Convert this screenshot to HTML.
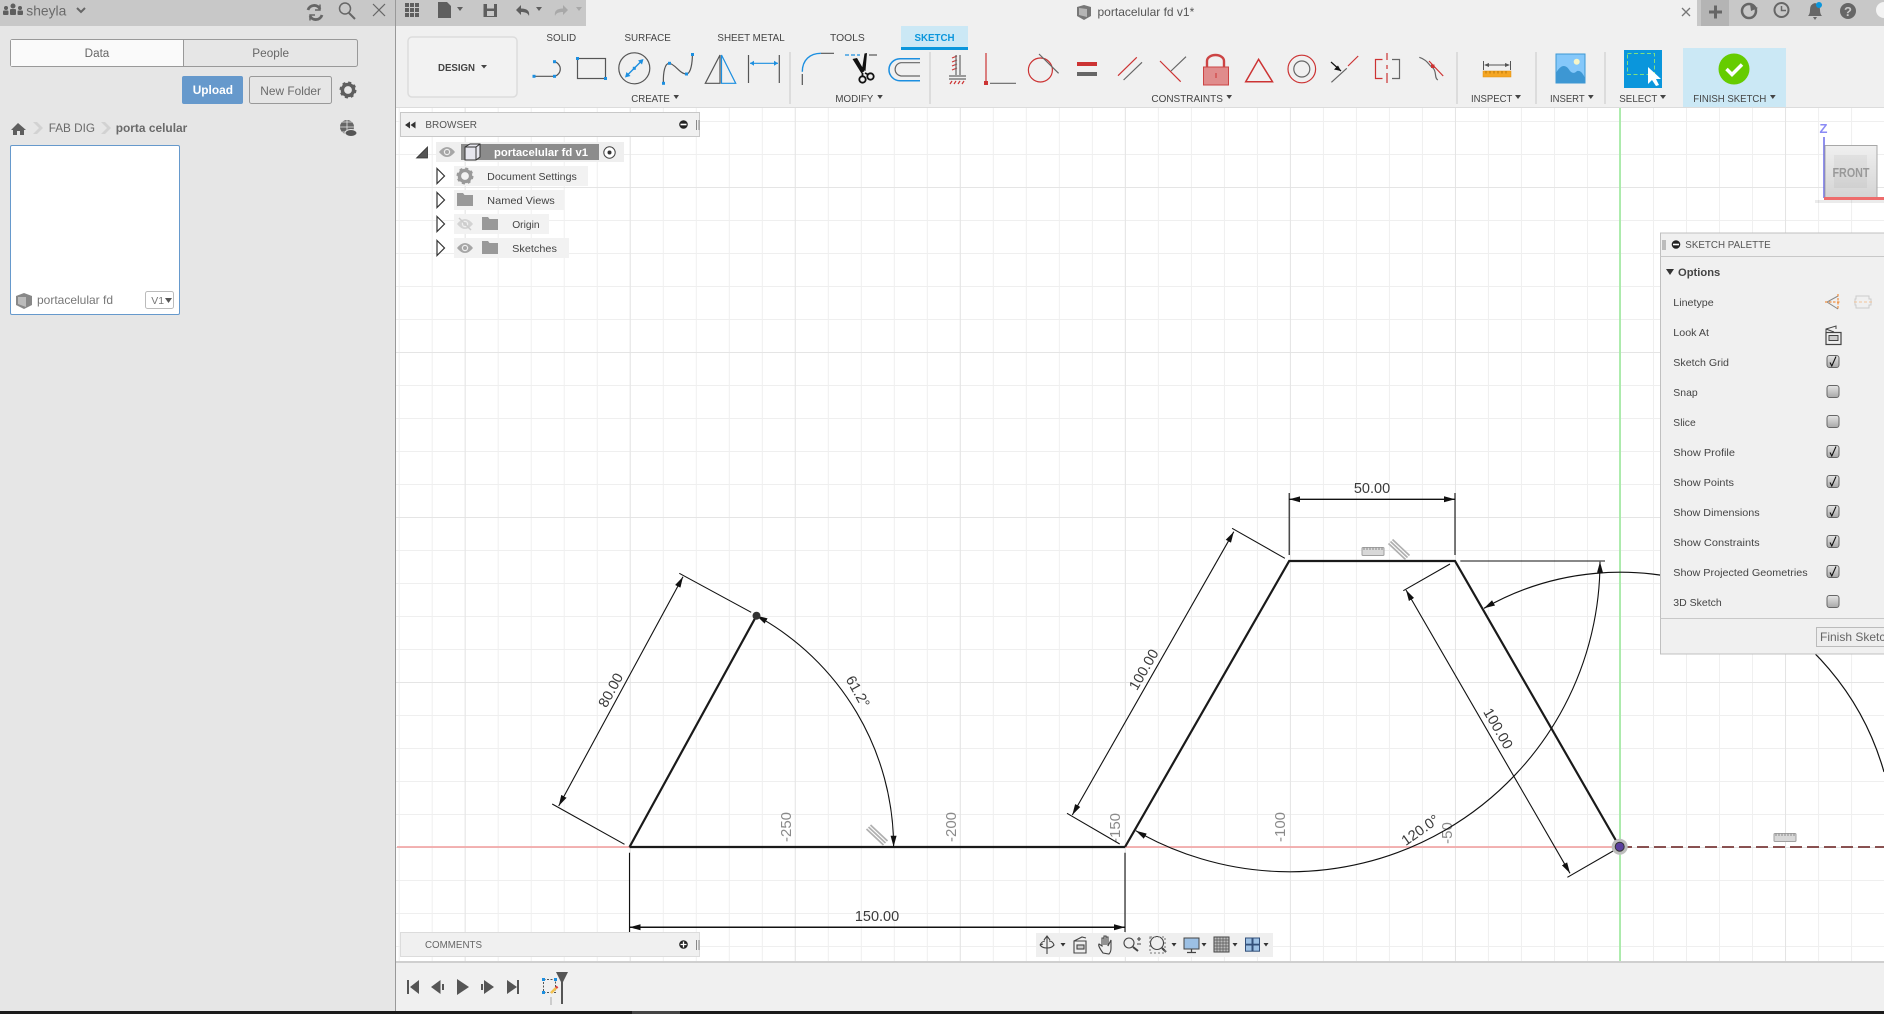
<!DOCTYPE html>
<html><head><meta charset="utf-8"><title>portacelular fd v1</title>
<style>
html,body{margin:0;padding:0;width:1884px;height:1014px;overflow:hidden;background:#fff}
svg{display:block;font-family:"Liberation Sans",Arial,sans-serif}
</style></head><body>
<svg width="1884" height="1014" viewBox="0 0 1884 1014" xmlns="http://www.w3.org/2000/svg">
<defs>
<pattern id="gm" patternUnits="userSpaceOnUse" x="1620" y="847" width="33.008" height="33"><path d="M0 0V33M0 0H33.008" fill="none" stroke="#efefef" stroke-width="2"/></pattern>
<pattern id="gM" patternUnits="userSpaceOnUse" x="1620" y="847" width="165.04" height="165"><path d="M0 0V165M0 0H165.04" fill="none" stroke="#e2e2e2" stroke-width="1.6"/></pattern>
<marker id="a" markerWidth="12" markerHeight="8" refX="11" refY="3.5" orient="auto-start-reverse" markerUnits="userSpaceOnUse"><path d="M0 0.5L11 3.5L0 6.5z" fill="#111"/></marker>
<linearGradient id="cb" x1="0" y1="0" x2="0" y2="1"><stop offset="0" stop-color="#e6e6e6"/><stop offset="1" stop-color="#a8a8a8"/></linearGradient>
<linearGradient id="vc" x1="0" y1="0" x2="0" y2="1"><stop offset="0" stop-color="#f0f0f0"/><stop offset="1" stop-color="#d4d4d4"/></linearGradient>
<g id="eye"><path d="M-8 0Q0-10 8 0Q0 10-8 0z" fill="#a6a6a6"/><circle r="3.2" fill="#eee"/><circle r="2" fill="#a6a6a6"/></g>
<g id="fold"><path d="M0 1h6l1.5 2H16V14H0z" fill="#999"/></g>
<g id="gear"><circle r="5.6" fill="none" stroke="currentColor" stroke-width="3.4"/><circle r="7.4" fill="none" stroke="currentColor" stroke-width="2.2" stroke-dasharray="3 2.8"/></g>
<g id="tri"><path d="M0 0L7.5 7.5L0 15z" fill="#fff" stroke="#333" stroke-width="1.2"/></g>
<g id="cbox"><rect x="-6" y="-6" width="12" height="12" rx="2.5" fill="url(#cb)" stroke="#666" stroke-width="1"/></g>
<g id="chk"><use href="#cbox"/><path d="M-3 1L-1.2 4.5L3 -5" fill="none" stroke="#111" stroke-width="1.1"/></g>
<g id="ruler"><rect x="0" y="1.500" width="22" height="8" rx="1" fill="#d8d8d8" stroke="#a0a0a0"/><path d="M2 1.500V4M5 1.500V4M8 1.500V4M11 1.500V4M14 1.500V4M17 1.500V4M20 1.500V4" stroke="#8a8a8a"/></g>
<g id="hatch" fill="none" stroke="#b0b0b0" stroke-width="1.700"><path d="M-8.500-8L8.500 8"/><path d="M-10.500-6L6.500 10"/><path d="M-6.500-10L10.500 6"/></g>
</defs>

<!-- canvas -->
<rect x="396" y="108" width="1488" height="854" fill="#fff"/>
<rect x="396" y="108" width="1488" height="854" fill="url(#gm)"/>
<rect x="396" y="108" width="1488" height="854" fill="url(#gM)"/>

<!-- axes -->
<path d="M397 847H1620" stroke="#f2a8a8" stroke-width="1.800"/>
<path d="M1620 108V961" stroke="#a6eba6" stroke-width="1.800"/>
<path d="M1620 847H1884" stroke="#7a3a3a" stroke-width="1.800" stroke-dasharray="12 5"/>

<!-- axis labels -->
<g fill="#8a8a8a" font-size="15" text-anchor="middle">
<text transform="translate(791 827) rotate(-90)">-250</text>
<text transform="translate(956 827) rotate(-90)">-200</text>
<text transform="translate(1120 828) rotate(-90)">-150</text>
<text transform="translate(1285 827) rotate(-90)">-100</text>
<text transform="translate(1452 833) rotate(-90)">-50</text>
</g>

<!-- sketch geometry -->
<g fill="none" stroke="#1a1a1a" stroke-width="2.200">
<path d="M629.500 847H1125"/>
<path d="M629.500 847L756.500 615.700"/>
<path d="M1125 847L1289.200 561H1455L1619.700 847"/>
</g>
<g fill="none" stroke="#111" stroke-width="1.100">
<path d="M624.500 844.300L552.200 804M751.200 612.300L679.300 573.300"/>
<path d="M558.700 806L683 576.700" marker-start="url(#a)" marker-end="url(#a)"/>
<path d="M756.500 615.700A264 264 0 0 1 893.600 846.700" marker-start="url(#a)" marker-end="url(#a)"/>
<path d="M629.500 852.700V932M1125 852.700V932"/>
<path d="M629.500 927.300H1125" marker-start="url(#a)" marker-end="url(#a)" stroke-width="1.500"/>
<path d="M1289.200 493V555M1455 493V555"/>
<path d="M1289.200 499.300H1455" marker-start="url(#a)" marker-end="url(#a)" stroke-width="1.400"/>
<path d="M1067 813.300L1119.700 844M1232.100 528.300L1284.900 558.300"/>
<path d="M1072.300 815L1233.800 531.700" marker-start="url(#a)" marker-end="url(#a)"/>
<path d="M1450 564L1403.300 590.700M1614.800 850L1567.400 877.300"/>
<path d="M1406 590L1570 873.300" marker-start="url(#a)" marker-end="url(#a)"/>
<path d="M1460.300 561H1605"/>
<path d="M1135.800 830.700A310 310 0 0 0 1600 561.700" marker-start="url(#a)" marker-end="url(#a)"/>
<path d="M1484 608.300A274.400 274.400 0 0 1 1884 772" marker-start="url(#a)" stroke-width="1.200"/>
</g>
<circle cx="756.500" cy="615.700" r="4" fill="#333"/>
<circle cx="1619.700" cy="846.700" r="8" fill="#bdbdbd"/><circle cx="1619.700" cy="846.700" r="4.500" fill="#5b3f9e" stroke="#333"/>

<!-- dim text -->
<g fill="#3a3a3a" font-size="14.500" text-anchor="middle">
<text transform="translate(615 692.500) rotate(-61.500)">80.00</text>
<text transform="translate(853.600 694) rotate(61)">61.2°</text>
<text x="877" y="921">150.00</text>
<text x="1372" y="493">50.00</text>
<text transform="translate(1148 672) rotate(-60)">100.00</text>
<text transform="translate(1494 731) rotate(60)">100.00</text>
<text transform="translate(1423 834) rotate(-35)">120.0°</text>
</g>
<use href="#hatch" x="877" y="835"/>
<use href="#hatch" x="1399" y="549.500"/>
<use href="#ruler" x="1362" y="546"/>
<use href="#ruler" x="1774" y="832"/>

<!-- ribbon bg -->
<rect x="396" y="0" width="1488" height="107" fill="#f0f0f0"/>
<path d="M396 107.500H1884" stroke="#dcdcdc"/>
<rect x="396" y="0" width="190" height="26" fill="#c8c8c8"/>
<rect x="1697" y="0" width="187" height="26" fill="#c8c8c8"/>
<rect x="1701" y="0" width="28" height="26" fill="#b4b4b4"/>
<rect x="1683" y="48" width="103" height="59" fill="#cbe8f5"/>

<!-- left panel -->
<rect x="0" y="0" width="396" height="1014" fill="#e6e6e6"/>
<rect x="0" y="0" width="396" height="26" fill="#c8c8c8"/>
<path d="M395.500 0V1014" stroke="#999"/>
<g fill="#5e5e5e"><circle cx="13" cy="6" r="2.500"/><circle cx="6" cy="8" r="2"/><circle cx="20" cy="8" r="2"/><rect x="10" y="9" width="6" height="6" rx="1"/><rect x="3" y="10.500" width="5.500" height="4.500" rx="1"/><rect x="17.500" y="10.500" width="5.500" height="4.500" rx="1"/></g>
<text x="26.300" y="15.500" font-size="14" fill="#6a6a6a" textLength="40" lengthAdjust="spacingAndGlyphs">sheyla</text>
<path d="M77 8L81 12L85 8" fill="none" stroke="#666" stroke-width="2"/>
<g fill="none" stroke="#666"><path d="M308 10A6.500 6.500 0 0 1 320 9M322 15A6.500 6.500 0 0 1 310 16" stroke-width="2.800"/><path d="M320 4.500V10H315M310 20.500V15H315" stroke-width="1.500"/>
<circle cx="345" cy="8.500" r="5.500" stroke-width="1.500"/><path d="M349 13L355 19" stroke-width="2"/><path d="M373 4L385 16M385 4L373 16" stroke-width="1.200"/></g>
<rect x="10.500" y="39.500" width="347" height="27" rx="2" fill="#e6e6e6" stroke="#999"/>
<rect x="11" y="40" width="172" height="26" fill="#fafafa"/>
<path d="M183.500 40V66" stroke="#999"/>
<text x="84.700" y="57" font-size="11.500" fill="#666" textLength="24.600" lengthAdjust="spacingAndGlyphs">Data</text>
<text x="252.300" y="57" font-size="11.500" fill="#666" textLength="36.700" lengthAdjust="spacingAndGlyphs">People</text>
<rect x="182" y="76" width="61" height="28" rx="2" fill="#6699cc"/>
<text x="192.700" y="94" font-size="12" font-weight="bold" fill="#fff" textLength="40.300" lengthAdjust="spacingAndGlyphs">Upload</text>
<rect x="249.500" y="76.500" width="82" height="27" rx="2" fill="#e6e6e6" stroke="#999"/>
<text x="260.300" y="95" font-size="12" fill="#6a6a6a" textLength="60.700" lengthAdjust="spacingAndGlyphs">New Folder</text>
<use href="#gear" x="348" y="90" color="#5e5e5e"/>
<path d="M18 123L11 130H13V135H17V131H20V135H24V130H26z" fill="#5e5e5e"/>
<path d="M33 122L39 128L33 134H37L43 128L37 122z" fill="#d2d2d2"/>
<text x="48.700" y="132" font-size="12" fill="#6a6a6a" textLength="46.300" lengthAdjust="spacingAndGlyphs">FAB DIG</text>
<path d="M101 122L107 128L101 134H105L111 128L105 122z" fill="#d2d2d2"/>
<text x="115.700" y="132" font-size="12" font-weight="bold" fill="#6a6a6a" textLength="71.600" lengthAdjust="spacingAndGlyphs">porta celular</text>
<circle cx="347" cy="127" r="7" fill="#666"/><path d="M340 127H354M347 120V134M342 122H352M342 132H352" stroke="#e6e6e6" stroke-width=".8"/><ellipse cx="351" cy="133" rx="6" ry="3.500" fill="#555" stroke="#e6e6e6"/>
<rect x="10.500" y="145.500" width="169" height="169" rx="1.500" fill="#fff" stroke="#6699cc"/>
<path d="M16 296L24 293L32 296V305L24 309L16 305z" fill="#888"/><path d="M18 297L26 297V307L18 304z" fill="#bbb"/>
<text x="37" y="304" font-size="12" fill="#777" textLength="76" lengthAdjust="spacingAndGlyphs">portacelular fd</text>
<rect x="145.500" y="291.500" width="28" height="17" rx="2" fill="#fff" stroke="#bbb"/>
<text x="151.300" y="304" font-size="10.500" fill="#777">V1</text>
<path d="M165 298H172L168.500 303z" fill="#555"/>

<!-- top icons -->
<g fill="#5e5e5e">
<path d="M405 3h4v4h-4zM410 3h4v4h-4zM415 3h4v4h-4zM405 8h4v4h-4zM410 8h4v4h-4zM415 8h4v4h-4zM405 13h4v4h-4zM410 13h4v4h-4zM415 13h4v4h-4z"/>
<path d="M438 2H447L451 6V18H438z"/><path d="M457 7H463L460 11z"/>
<path d="M483.500 4H497V17H483.500z"/>
<path d="M516 10L521 5V8.500C527 8.500 530 11 529 16C528 13 525 12 521 12V15z"/><path d="M536 7H542L539 11z"/>
</g>
<rect x="487" y="4" width="7" height="4.500" fill="#c8c8c8"/><rect x="487" y="11" width="7" height="5" fill="#c8c8c8"/>
<g fill="#a8a8a8"><path d="M568 10L563 5V8.500C557 8.500 554 11 555 16C556 13 559 12 563 12V15z"/><path d="M576 7H582L579 11z"/></g>
<path d="M1084 5L1091 7V16L1084 20L1077 16V7z" fill="#777"/><path d="M1079 8L1087 9V17L1079 15z" fill="#b5b5b5"/>
<text x="1097.500" y="16" font-size="12" fill="#555" textLength="96.800" lengthAdjust="spacingAndGlyphs">portacelular fd v1*</text>
<path d="M1682 8L1690 16M1690 8L1682 16" stroke="#777" stroke-width="1.300"/>
<path d="M1709 12H1722M1715.500 5.500V18.500" stroke="#666" stroke-width="3"/>
<circle cx="1749" cy="11" r="7" fill="none" stroke="#666" stroke-width="2.500"/><path d="M1750 4L1758 8L1751 11z" fill="#666"/>
<circle cx="1781.500" cy="10" r="7" fill="none" stroke="#666" stroke-width="2"/><path d="M1781.500 6V10.500H1786" fill="none" stroke="#666" stroke-width="1.500"/>
<path d="M1815 3Q1810 4 1810 10Q1810 14 1808 16H1822Q1820 14 1820 10Q1820 4 1815 3zM1813 17H1817L1815 20z" fill="#666"/><circle cx="1819" cy="5" r="3" fill="#0a96dc"/>
<circle cx="1848" cy="11" r="8" fill="#666"/><text x="1848" y="16" font-size="13" font-weight="bold" text-anchor="middle" fill="#c8c8c8">?</text>
<circle cx="1884" cy="10" r="8" fill="#f4f4f4"/>

<!-- Design -->
<rect x="408" y="37" width="109" height="60" rx="4" fill="#f2f2f2" stroke="#dcdcdc" stroke-width="1.500"/>
<text x="438" y="71" font-size="10.500" font-weight="bold" fill="#444" textLength="37" lengthAdjust="spacingAndGlyphs">DESIGN</text>
<path d="M481 65H487L484 68.500z" fill="#444"/>

<!-- tabs -->
<g font-size="10.500" fill="#444">
<text x="546.400" y="41" textLength="29.700" lengthAdjust="spacingAndGlyphs">SOLID</text>
<text x="624.500" y="41" textLength="46.300" lengthAdjust="spacingAndGlyphs">SURFACE</text>
<text x="717.400" y="41" textLength="67.300" lengthAdjust="spacingAndGlyphs">SHEET METAL</text>
<text x="830" y="41" textLength="34.800" lengthAdjust="spacingAndGlyphs">TOOLS</text>
</g>
<rect x="901" y="26" width="67" height="24" fill="#cbe8f5"/><rect x="901" y="47" width="67" height="3" fill="#0a96dc"/>
<text x="914.500" y="41" font-size="10.500" font-weight="bold" fill="#0a96dc" textLength="40" lengthAdjust="spacingAndGlyphs">SKETCH</text>

<!-- section labels -->
<g font-size="10.500" fill="#444">
<text x="631.200" y="102" textLength="38.600" lengthAdjust="spacingAndGlyphs">CREATE</text>
<text x="835.400" y="102" textLength="37.900" lengthAdjust="spacingAndGlyphs">MODIFY</text>
<text x="1151.400" y="102" textLength="71.500" lengthAdjust="spacingAndGlyphs">CONSTRAINTS</text>
<text x="1471" y="102" textLength="41.300" lengthAdjust="spacingAndGlyphs">INSPECT</text>
<text x="1550" y="102" textLength="34.700" lengthAdjust="spacingAndGlyphs">INSERT</text>
<text x="1619.300" y="102" textLength="38" lengthAdjust="spacingAndGlyphs">SELECT</text>
<text x="1693.300" y="102" textLength="73" lengthAdjust="spacingAndGlyphs">FINISH SKETCH</text>
</g>
<g fill="#444">
<path d="M673.500 95H679L676.200 99zM877.300 95H882.800L880 99zM1226.400 95H1232L1229.200 99zM1515 95H1521L1518 99zM1588 95H1593.700L1590.800 99zM1660 95H1666L1663 99zM1770 95H1775.700L1772.800 99z"/>
</g>
<g fill="#dcdcdc"><rect x="789" y="52" width="2" height="52"/><rect x="929" y="52" width="2" height="52"/><rect x="1456" y="52" width="2" height="52"/><rect x="1535" y="52" width="2" height="52"/><rect x="1604" y="52" width="2" height="52"/></g>

<!-- create icons -->
<g fill="none" stroke-width="1.200">
<path d="M534 76.300H554.500" stroke="#555"/><path d="M554.500 61.700A7.500 7.500 0 0 1 554.500 76.300" stroke="#555"/>
<rect x="577.500" y="58.500" width="28" height="20" stroke="#555"/>
<circle cx="634.300" cy="68.300" r="15.500" stroke="#555"/>
<path d="M626 76.500L642.500 60" stroke="#1c8fe0" stroke-width="1.400"/>
<path d="M663.400 83.300C663 72 665 63 669.400 63.300C675 64 680 74 686.300 74C691 74 692.400 62 692.400 54.300" stroke="#555"/>
<path d="M705.300 83.300L720 55V83.300z" stroke="#555"/><path d="M721.500 55L735.700 83.300H721.500z" stroke="#1c8fe0"/>
<path d="M748.500 55V83M779.300 55V83" stroke="#555"/><path d="M750 63.300H778" stroke="#1c8fe0"/>
<path d="M802.300 71.700C802.300 60 810 53.300 820.900 53.300" stroke="#1c8fe0" stroke-width="1.400"/><path d="M821 53.300H834M802.300 74V85" stroke="#555"/>
<path d="M845 55H860" stroke="#1c8fe0" stroke-dasharray="4 2"/><path d="M869 55H877" stroke="#555"/>
<path d="M920 58.700H900A11 11 0 0 0 900 80.700H920" stroke="#1c8fe0" stroke-width="1.500"/><path d="M920 62.700H901A6.700 6.700 0 0 0 901 76H920" stroke="#666"/>
</g>
<g fill="#1c8fe0">
<rect x="532.500" y="74.800" width="3" height="3"/><rect x="553" y="74.800" width="3" height="3"/><rect x="553" y="60.200" width="3" height="3"/>
<rect x="576" y="57" width="3" height="3"/><rect x="604" y="77" width="3" height="3"/>
<rect x="632.800" y="66.800" width="3" height="3"/><path d="M643.500 59L638 60.500L642 64.500zM625 77.500L630.500 76L626.500 72z"/>
<rect x="662" y="81.800" width="3" height="3"/><rect x="668" y="61.800" width="3" height="3"/><rect x="685" y="72.500" width="3" height="3"/><rect x="691" y="53" width="3" height="3"/>
<path d="M750 63.300L754 60.800V65.800zM778 63.300L774 60.800V65.800z"/>
</g>
<path d="M852.500 59L857 58L864.500 71L861.500 73.500zM864.500 53.500L867 53L865.500 71L862 69z" fill="#111"/>
<g stroke="#111" fill="none" stroke-width="1.800"><circle cx="862.500" cy="79.500" r="3.200"/><circle cx="870.500" cy="76.500" r="3.200"/><path d="M862.500 73V76.500M865 73L868 74.500"/></g>

<!-- constraints -->
<g fill="none" stroke="#cc3333" stroke-width="1.200">
<path d="M952 58L957 56M952 62L957 60M952 66L957 64M952 70L957 68"/>
<path d="M952 81L950 84M956 81L954 84M960 81L958 84M964 81L962 84"/>
<path d="M986 53V83"/><circle cx="1040.400" cy="70" r="12"/>
<path d="M1118 75.700L1136.800 57.300M1160 61L1180.700 81.700"/>
<path d="M1245.700 81.700L1258.600 59.300L1272.500 81.700z" stroke-width="1.500"/>
<circle cx="1301.800" cy="69" r="13.800"/>
<path d="M1348 66L1358.200 56M1429 61L1443.200 76"/>
<path d="M1382.500 59.500H1375.500V78.500H1382.500M1387 53V60M1387 65V69M1387 73V83"/>
</g>
<g fill="none" stroke="#666" stroke-width="1.200">
<path d="M956 55V75M960 55V75M949 76H966M949 79H966"/>
<path d="M990 83.300H1016M1039 54L1058.600 73.300"/>
<path d="M1123.600 80L1142 62.300M1171 71L1186 56.700"/>
<circle cx="1301.800" cy="69" r="8"/>
<path d="M1331.400 82.300L1346.800 68.300M1392 59.500H1399.500V78.500H1392"/>
<path d="M1419.300 57.300C1428 60 1429 66 1433 68C1437 72 1434 78 1437.900 80"/>
</g>
<g fill="#cc3333"><rect x="984" y="81" width="4" height="4"/><rect x="1077" y="62" width="20" height="4"/><rect x="1431" y="64.500" width="3.500" height="3.500"/></g>
<rect x="1077" y="72" width="20" height="4" fill="#666"/>
<path d="M1207 67V61A8.500 6 0 0 1 1224 61V67" fill="none" stroke="#cc4444" stroke-width="2.400"/>
<rect x="1203.500" y="67" width="25" height="18" fill="#e08c8c" stroke="#cc4444"/><path d="M1216 73V78" stroke="#cc3333"/>
<path d="M1331 62L1341 71" stroke="#111" stroke-width="1.200"/><path d="M1341 71L1334 69.500L1338 65.500z" fill="#111"/>

<!-- inspect / insert / select / finish -->
<path d="M1483.500 61V70M1510.500 61V70" stroke="#555"/><path d="M1485 65H1509" stroke="#555"/><path d="M1484 65L1489 63V67zM1510 65L1505 63V67z" fill="#555"/>
<rect x="1483" y="71" width="28" height="6" fill="#f5a623" stroke="#e0900f" stroke-width=".5"/><path d="M1486 71V73.500M1490 71V73.500M1494 71V73.500M1498 71V73.500M1502 71V73.500M1506 71V73.500" stroke="#a86a00" stroke-width=".8"/>
<rect x="1556" y="54" width="29" height="29" fill="#85c8fa" stroke="#3d97d3"/>
<circle cx="1576.700" cy="61.700" r="3" fill="#f5f5c8"/>
<path d="M1556 83V73C1561 64 1566 64 1570 71C1573 74 1575 73 1577 71C1581 70 1583 74 1585 78V83z" fill="#3d97d3"/>
<rect x="1624" y="50" width="38" height="38" fill="#0a96dc"/>
<rect x="1627.500" y="53.500" width="27" height="21" fill="none" stroke="#7fe07f" stroke-dasharray="4 2.500"/>
<path d="M1648 67V84L1652 80L1656 86L1659 85L1656 79H1661z" fill="#fff"/>
<circle cx="1734" cy="69" r="15.500" fill="#66cc00"/><path d="M1726.500 69L1732 74.500L1742 64.500" fill="none" stroke="#fff" stroke-width="3.500"/>

<!-- view cube -->
<text x="1823.500" y="133" font-size="13" font-weight="bold" fill="#8a8af5" text-anchor="middle">Z</text>
<path d="M1824 137V198" stroke="#6a6ae8" stroke-width="1.500"/>
<rect x="1825" y="145.500" width="52" height="52" fill="url(#vc)" stroke="#a8a8a8"/>
<rect x="1834" y="155" width="33" height="33" fill="#000" opacity=".04"/>
<text x="1832.500" y="177" font-size="12.500" font-weight="bold" fill="#999" textLength="37" lengthAdjust="spacingAndGlyphs">FRONT</text>
<rect x="1824" y="197" width="60" height="3" fill="#ee6c6c"/>
<rect x="1815" y="200" width="69" height="3" fill="#000" opacity=".08"/>

<!-- browser panel -->
<rect x="400.500" y="112.500" width="299" height="24" fill="#f0f0f0" stroke="#c8c8c8"/>
<path d="M405 125L410 121.500V128.500zM410.500 125L415.500 121.500V128.500z" fill="#333"/>
<text x="425.400" y="128" font-size="10.500" fill="#555" textLength="51.600" lengthAdjust="spacingAndGlyphs">BROWSER</text>
<circle cx="683.500" cy="124.500" r="4.300" fill="#222"/><rect x="680.500" y="123.700" width="6" height="1.600" fill="#fff"/>
<path d="M696.500 120V130M699 120V130" stroke="#888"/>

<path d="M416.500 158L427.500 147V158z" fill="#555" stroke="#333" stroke-width=".8"/>
<rect x="436" y="142" width="188" height="20" fill="#efefef"/>
<use href="#eye" x="447" y="152"/>
<rect x="461" y="144" width="138" height="16" fill="#8c8c8c"/>
<path d="M465 147L470 144H480V157L476 160H465z" fill="#e6e6ee" stroke="#333"/><path d="M476 147V160M465 147H476L480 144" fill="none" stroke="#333"/>
<text x="494" y="156" font-size="10.800" font-weight="bold" fill="#fff" textLength="94" lengthAdjust="spacingAndGlyphs">portacelular fd v1</text>
<circle cx="609.500" cy="152.500" r="5.700" fill="#fff" stroke="#444"/><circle cx="609.500" cy="152.500" r="2" fill="#333"/>

<rect x="454" y="166" width="134" height="20" fill="#f2f2f2"/><rect x="454" y="190" width="110" height="20" fill="#f2f2f2"/><rect x="454" y="214" width="95" height="20" fill="#f2f2f2"/><rect x="454" y="238" width="115" height="20" fill="#f2f2f2"/>
<use href="#tri" x="437" y="168.500"/><use href="#tri" x="437" y="192.500"/><use href="#tri" x="437" y="216.500"/><use href="#tri" x="437" y="240.500"/>
<use href="#gear" x="465" y="176" color="#999"/>
<use href="#fold" x="457" y="192"/>
<use href="#eye" x="465" y="224" opacity=".4"/><path d="M459 218L471 230" stroke="#ccc" stroke-width="1.500"/>
<use href="#fold" x="482" y="216"/>
<use href="#eye" x="465" y="248"/>
<use href="#fold" x="482" y="240"/>
<g font-size="10.500" fill="#444">
<text x="487.200" y="180" textLength="89.600" lengthAdjust="spacingAndGlyphs">Document Settings</text>
<text x="487.200" y="204" textLength="67.600" lengthAdjust="spacingAndGlyphs">Named Views</text>
<text x="512.200" y="228" textLength="27.400" lengthAdjust="spacingAndGlyphs">Origin</text>
<text x="512.200" y="252" textLength="44.700" lengthAdjust="spacingAndGlyphs">Sketches</text>
</g>

<!-- comments -->
<rect x="400.500" y="932.500" width="299" height="24" fill="#f0f0f0" stroke="#dcdcdc"/>
<text x="425" y="948" font-size="10.500" fill="#666" textLength="57" lengthAdjust="spacingAndGlyphs">COMMENTS</text>
<circle cx="683.500" cy="944.500" r="4.300" fill="#222"/><path d="M680.500 944.500H686.500M683.500 941.500V947.500" stroke="#fff" stroke-width="1.300"/>
<path d="M696.500 940V950M699 940V950" stroke="#888"/>

<!-- nav bar -->
<rect x="1036" y="933" width="237" height="24" fill="#efefef"/>
<g fill="none" stroke="#444" stroke-width="1.100">
<path d="M1047 936V954M1044 940L1047 936L1050 940M1040 945C1043 949 1051 949 1054 945C1053 942 1051 941 1049 941M1045 941C1043 941 1041 943 1040 945M1040 945L1043 944"/>
<path d="M1074 941L1082 937L1086 938M1074 941H1086V953H1074z"/><rect x="1077" y="945" width="7" height="4" fill="#ccc"/>
<path d="M1103 953C1100 949 1098 945 1099 944L1102 946V938L1104 938V945V936L1106 936V945V937L1108 937V946L1111 940V948C1111 951 1110 953 1109 954z"/>
<circle cx="1129" cy="943" r="5"/><path d="M1133 947L1138 951" stroke-width="2"/><path d="M1137 939H1141M1139 937V941M1137 944H1141"/>
<circle cx="1157" cy="943" r="6.500"/><path d="M1162 948L1166 952" stroke-width="2"/><rect x="1150" y="937" width="15" height="16" stroke-dasharray="2 2" stroke="#777"/>
</g>
<rect x="1184" y="938" width="15" height="11" fill="#9cc0e4" stroke="#444"/><path d="M1191.500 949V952M1187 952.500H1196" stroke="#444" stroke-width="1.300"/>
<rect x="1214" y="937" width="15" height="15" fill="#bbb" stroke="#444"/><path d="M1217 937V952M1220 937V952M1223 937V952M1226 937V952M1214 940H1229M1214 943H1229M1214 946H1229M1214 949H1229" stroke="#555" stroke-width=".7"/>
<rect x="1245.500" y="938" width="6.500" height="6.200" fill="#9cc0e4" stroke="#33507a"/><rect x="1253" y="938" width="6.500" height="6.200" fill="#9cc0e4" stroke="#33507a"/><rect x="1245.500" y="945" width="6.500" height="6.200" fill="#9cc0e4" stroke="#33507a"/><rect x="1253" y="945" width="6.500" height="6.200" fill="#9cc0e4" stroke="#33507a"/>
<path d="M1060.500 943H1065.500L1063 946.500zM1171.500 943H1176.500L1174 946.500zM1201.500 943H1206.500L1204 946.500zM1232.500 943H1237.500L1235 946.500zM1263.500 943H1268.500L1266 946.500z" fill="#333"/>

<!-- sketch palette -->
<rect x="1660.500" y="233" width="224" height="421" fill="#f0f0f0" stroke="#c0c0c0"/>
<path d="M1660.500 256.500H1884M1660.500 618.500H1884" stroke="#c8c8c8"/>
<path d="M1663 240V250M1665 240V250" stroke="#888"/>
<circle cx="1676" cy="244.500" r="4.300" fill="#222"/><rect x="1673" y="243.700" width="6" height="1.600" fill="#fff"/>
<text x="1685.300" y="248" font-size="10.500" fill="#555" textLength="85.400" lengthAdjust="spacingAndGlyphs">SKETCH PALETTE</text>
<path d="M1666 269H1674L1670 275z" fill="#333"/>
<text x="1678" y="276" font-size="10.800" font-weight="bold" fill="#444" textLength="42.300" lengthAdjust="spacingAndGlyphs">Options</text>
<g font-size="10.500" fill="#444">
<text x="1673.300" y="306" textLength="40.400" lengthAdjust="spacingAndGlyphs">Linetype</text>
<text x="1673.300" y="336" textLength="35.700" lengthAdjust="spacingAndGlyphs">Look At</text>
<text x="1673.300" y="366" textLength="55.700" lengthAdjust="spacingAndGlyphs">Sketch Grid</text>
<text x="1673.300" y="396" textLength="24.400" lengthAdjust="spacingAndGlyphs">Snap</text>
<text x="1673.300" y="426" textLength="22.400" lengthAdjust="spacingAndGlyphs">Slice</text>
<text x="1673.300" y="456" textLength="61.700" lengthAdjust="spacingAndGlyphs">Show Profile</text>
<text x="1673.300" y="486" textLength="60.700" lengthAdjust="spacingAndGlyphs">Show Points</text>
<text x="1673.300" y="516" textLength="86.400" lengthAdjust="spacingAndGlyphs">Show Dimensions</text>
<text x="1673.300" y="546" textLength="86.400" lengthAdjust="spacingAndGlyphs">Show Constraints</text>
<text x="1673.300" y="576" textLength="134.400" lengthAdjust="spacingAndGlyphs">Show Projected Geometries</text>
<text x="1673.300" y="606" textLength="48.400" lengthAdjust="spacingAndGlyphs">3D Sketch</text>
</g>
<path d="M1838 296L1827 302L1838 309" fill="none" stroke="#888"/><path d="M1825 302H1840M1838 294V310" stroke="#ef7a1a" stroke-dasharray="2.500 1.500" fill="none"/>
<path d="M1856 296H1869V299H1871V305H1869V308H1856V305H1855V299H1856z" fill="none" stroke="#ccc"/><path d="M1854 302H1872" stroke="#f2c49a" stroke-dasharray="3 2"/>
<path d="M1826 333V329L1836 326V329M1826 329L1834 332" fill="none" stroke="#444"/><rect x="1826" y="332.500" width="15" height="12" fill="#eee" stroke="#444" stroke-width="1.200"/><rect x="1829" y="335.500" width="9" height="5" fill="#ccc" stroke="#444"/>
<use href="#chk" x="1833" y="361.500"/><use href="#cbox" x="1833" y="391.500"/><use href="#cbox" x="1833" y="421.500"/><use href="#chk" x="1833" y="451.500"/><use href="#chk" x="1833" y="481.500"/><use href="#chk" x="1833" y="511.500"/><use href="#chk" x="1833" y="541.500"/><use href="#chk" x="1833" y="571.500"/><use href="#cbox" x="1833" y="601.500"/>
<rect x="1816.500" y="627.500" width="80" height="19" fill="#eee" stroke="#bbb"/>
<text x="1820" y="641" font-size="12" fill="#666">Finish Sketch</text>

<!-- timeline -->
<rect x="396" y="961" width="1488" height="50" fill="#f0f0f0"/>
<rect x="396" y="961" width="1488" height="2" fill="#cfcfcf"/>
<rect x="0" y="1011" width="1884" height="3" fill="#1b1b1b"/><rect x="632" y="1011" width="48" height="3" fill="#444"/>
<g fill="#555">
<path d="M407 980H409V994H407zM419 980V994L410 987z"/>
<path d="M431 987L440.500 980V994zM442 984H444V990H442z"/>
<path d="M457 979L469 987L457 995z"/>
<path d="M481 984H483V990H481zM484 980L494 987L484 994z"/>
<path d="M507 980L517 987L507 994zM517 980H519V994H517z"/>
<path d="M556 972H568L563 982V1004H561V982z"/>
</g>
<rect x="543.500" y="979.500" width="12" height="13" fill="none" stroke="#555" stroke-dasharray="2 1.500"/>
<g fill="#1c8fe0"><rect x="542" y="978" width="3" height="3"/><rect x="554" y="978" width="3" height="3"/><rect x="542" y="991" width="3" height="3"/></g>
<path d="M551 993L556 988" stroke="#f2c14e" stroke-width="2.500"/><path d="M556 988L557.500 986.500" stroke="#e04040" stroke-width="2.500"/>
<rect x="550" y="997" width="2" height="8" fill="#ccc"/>
</svg>
</body></html>
